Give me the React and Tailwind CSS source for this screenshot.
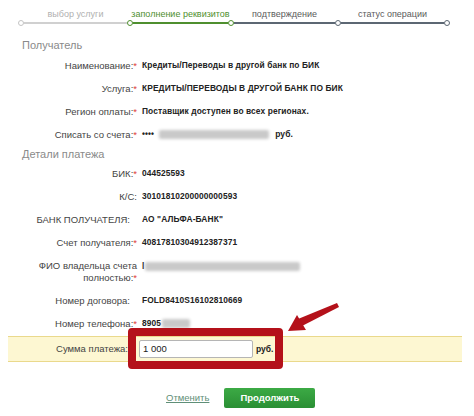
import React from 'react';

const STEPS = [
  { label: 'выбор услуги', w: 'w-[109px]', text: 'text-[#b0b0b0]' },
  { label: 'заполнение реквизитов', w: 'w-[101px]', text: 'text-[#4f8f2f]' },
  { label: 'подтверждение', w: 'w-[107px]', text: 'text-[#5b5b5b]' },
  { label: 'статус операции', w: 'w-[109px]', text: 'text-[#5b5b5b]' },
];

function Dot({ c }) {
  return <span className={`w-[6px] h-[6px] rounded-full border-[1.5px] bg-white shrink-0 ${c}`} />;
}

function Blur({ w, c = '' }) {
  return <span className={`inline-block h-[9px] bg-[#c9c9c9] blur-[1.5px] rounded-[2px] ${w} ${c}`} />;
}

function Row({ label, req, pad, h = 'h-[23px]', children }) {
  return (
    <div className={`flex items-center ${h}`}>
      <div className={`w-[137px] text-right text-[9.5px] leading-[12px] text-[#444] ${pad ? 'pr-[7px]' : ''}`}>
        {label}
        {req && <span className="text-[#e0443a]">*</span>}
      </div>
      <div className="pl-[5px] flex items-center text-[8.4px] font-bold text-[#222] tracking-[0.1px] whitespace-nowrap">{children}</div>
    </div>
  );
}

function Title({ children, h }) {
  return <div className={`pl-[22px] flex items-center text-[11px] text-[#8a8a8a] ${h}`}>{children}</div>;
}

export default function App() {
  return (
    <div className="relative w-[474px] h-[416px] overflow-hidden bg-white font-['Liberation_Sans',Arial,sans-serif]">
      {/* steps */}
      <div className="pt-[8px] pl-[21px] flex">
        {STEPS.map((s) => (
          <div key={s.label} className={`${s.w} shrink-0 whitespace-nowrap flex justify-center text-[9px] leading-[12px] ${s.text}`}>{s.label}</div>
        ))}
      </div>
      <div className="pl-[18px] flex items-center h-[6px] mb-[10px]">
        <Dot c="border-[#c4c4c4]" />
        <span className="w-[103px] h-[2px] bg-[#d0d0d0]" />
        <Dot c="border-[#4f8f2f]" />
        <span className="w-[95px] h-[2px] bg-[#4f8f2f]" />
        <Dot c="border-[#4f8f2f]" />
        <span className="w-[101px] h-[2px] bg-[#5c6773]" />
        <Dot c="border-[#5c6773]" />
        <span className="w-[103px] h-[2px] bg-[#5c6773]" />
        <Dot c="border-[#5c6773]" />
      </div>

      <Title h="h-[18px]">Получатель</Title>
      <Row label="Наименование:" req>Кредиты/Переводы в другой банк по БИК</Row>
      <Row label="Услуга:" req>КРЕДИТЫ/ПЕРЕВОДЫ В ДРУГОЙ БАНК ПО БИК</Row>
      <Row label="Регион оплаты:" req>Поставщик доступен во всех регионах.</Row>
      <Row label="Списать со счета:" req>
        <span>••••</span>
        <Blur w="w-[110px]" c="ml-[5px]" />
        <span className="ml-[6px] text-[8.5px]">руб.</span>
      </Row>

      <Title h="h-[16px]">Детали платежа</Title>
      <Row label="БИК:" req>044525593</Row>
      <Row label="К/С:">30101810200000000593</Row>
      <Row label="БАНК ПОЛУЧАТЕЛЯ:" pad>АО "АЛЬФА-БАНК"</Row>
      <Row label="Счет получателя:" req>40817810304912387371</Row>
      <Row label={<>ФИО владельца счета<br />полностью:</>} req h="h-[35px]">
        <span className="-mt-[10px]">l</span>
        <Blur w="w-[155px]" c="ml-[1px] -mt-[10px]" />
      </Row>
      <Row label="Номер договора:" pad>FOLD8410S16102810669</Row>
      <Row label="Номер телефона:" req>
        <span>8905</span>
        <Blur w="w-[28px]" c="ml-[1px]" />
      </Row>

      <div className="mt-[1px] ml-[8px] w-[454px] h-[26px] flex items-center bg-[#fdf7d2] border-y border-[#ead98c]">
        <div className="w-[122px] pr-[2px] text-right text-[9.5px] text-[#444]">Сумма платежа:</div>
        <div className="ml-[9px] w-[114px] h-[18px] border border-[#b5b5b5] rounded-[2px] bg-white flex items-center pl-[3px] text-[9.5px] text-[#222]">1 000</div>
        <span className="ml-[3px] text-[8.5px] font-bold text-[#222]">руб.</span>
      </div>

      <div className="mt-[26px] flex items-center">
        <span className="ml-[166px] text-[9.5px] text-[#5f8f78] underline">Отменить</span>
        <button className="ml-[15px] w-[91px] h-[20px] rounded-[2px] bg-gradient-to-b from-[#3caa45] to-[#2a8f34] text-white text-[9.5px] font-bold">Продолжить</button>
      </div>

      {/* highlight overlay */}
      <div className="absolute left-[128px] top-[328px] w-[155px] h-[41px] border-[8px] border-[#b4111a] rounded-[4px]" />
      <svg className="absolute left-0 top-0" width="474" height="416">
        <polygon points="337,303 339,307 302,326 298,319" fill="#b4111a" />
        <polygon points="288,331 297,315 306,330" fill="#b4111a" />
      </svg>
    </div>
  );
}
